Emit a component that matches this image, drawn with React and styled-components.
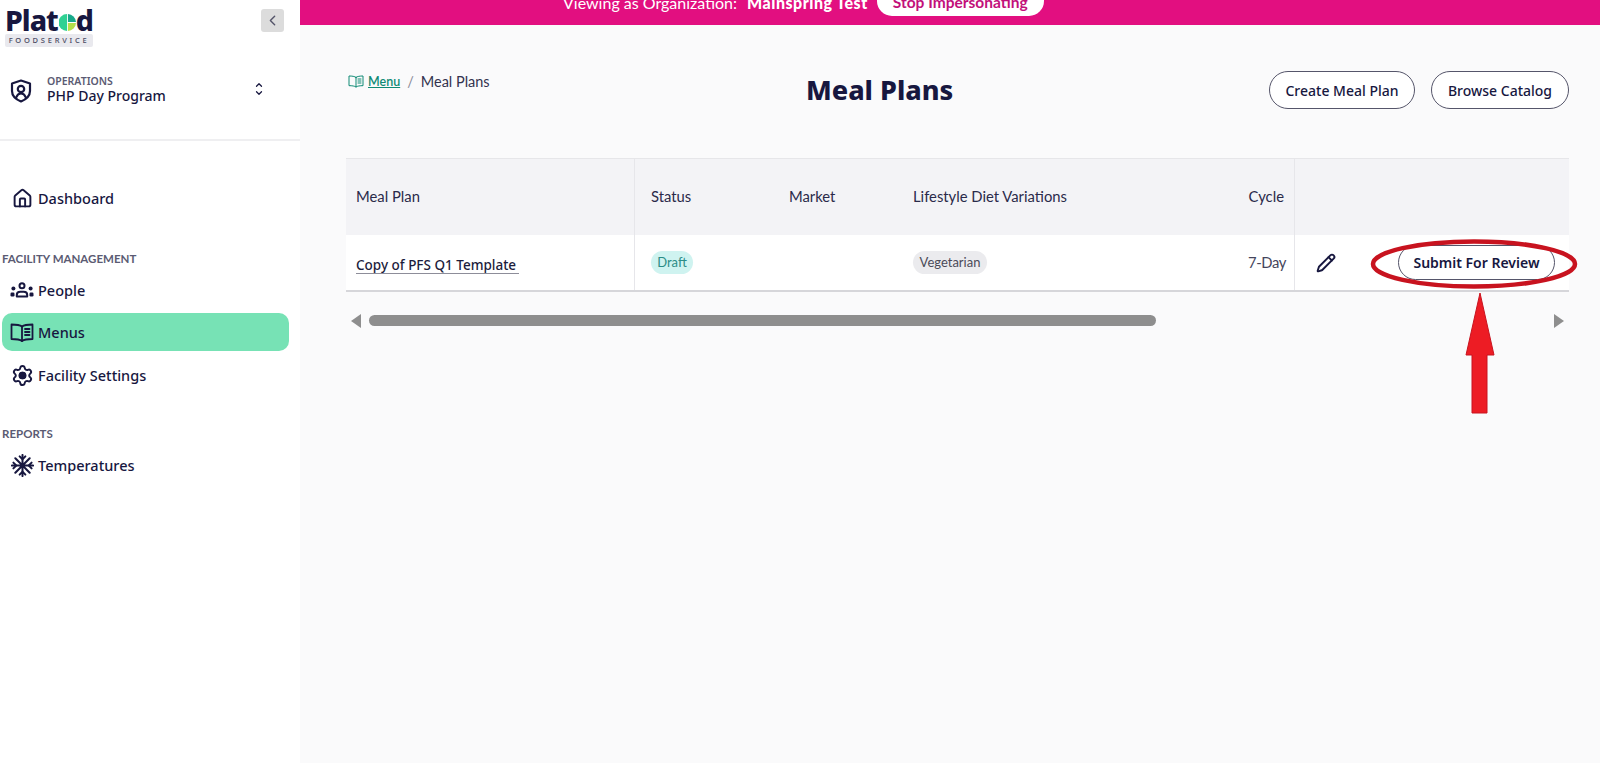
import React from 'react';
import styled, { createGlobalStyle } from 'styled-components';
import { House, Settings, ChevronUp, ChevronDown, ChevronLeft, Pencil } from 'lucide-react';

const ui = '"Noto Sans", "Open Sans", sans-serif';
const table = 'Lato, "Noto Sans", sans-serif';
const navy = '#17173f';

const Global = createGlobalStyle`
  html, body { margin: 0; padding: 0; height: 100%; background: #fff; overflow: hidden; }
  #root { height: 100%; }
`;

const Page = styled.div`
  display: flex;
  height: 763px;
  width: 1600px;
  font-family: ${ui};
  color: ${navy};
`;

const Sidebar = styled.aside`
  width: 300px;
  flex: none;
  background: #fff;
  display: flex;
  flex-direction: column;
`;

const Brand = styled.div`
  display: flex;
  justify-content: space-between;
  align-items: flex-start;
  padding: 7px 16px 0 5px;
  height: 66px;
  box-sizing: border-box;
`;

const Logo = styled.div`
  width: 88px;
`;

const LogoWord = styled.div`
  display: flex;
  align-items: center;
  height: 26px;
  font-size: 28.5px;
  font-weight: 800;
  letter-spacing: -1px;
  line-height: 26px;
  color: ${navy};
`;

const LogoSub = styled.div`
  margin-top: 1px;
  height: 13px;
  background: #e9e9ee;
  border-radius: 2px;
  font-size: 7.5px;
  line-height: 13px;
  letter-spacing: 2.75px;
  text-align: center;
  white-space: nowrap;
  color: #4b4b63;
  font-weight: 500;
`;

const Collapse = styled.button`
  width: 23px;
  height: 23px;
  margin-top: 2px;
  border: 0;
  padding: 0;
  border-radius: 3px;
  background: #dcdcdc;
  color: #55556a;
  display: flex;
  align-items: center;
  justify-content: center;
`;

const OrgSwitch = styled.div`
  display: flex;
  align-items: center;
  height: 49px;
  padding: 0 0 24px 9px;
  border-bottom: 2px solid #efeff1;
`;

const OrgText = styled.div`
  margin-left: 14px;
  width: 207px;
  margin-top: -2px;
`;

const OrgLabel = styled.div`
  font-size: 10.5px;
  line-height: 12px;
  font-weight: 600;
  color: #5b5b73;
`;

const OrgName = styled.div`
  font-size: 14px;
  line-height: 18px;
  font-weight: 500;
`;

const Updown = styled.div`
  display: flex;
  flex-direction: column;
  align-items: center;
  margin-top: -4px;
  svg { margin: -1px 0; display: block; }
`;

const Nav = styled.nav`
  display: flex;
  flex-direction: column;
  padding: 38px 0 0 2px;
`;

const NavItem = styled.a`
  display: flex;
  align-items: center;
  width: 287px;
  height: 38px;
  margin-bottom: ${(p) => p.$mb ?? 4}px;
  padding-left: 8px;
  box-sizing: border-box;
  border-radius: 10px;
  background: ${(p) => (p.$active ? '#77e2b5' : 'transparent')};
  font-size: 14.5px;
  font-weight: 500;
  color: ${navy};
`;

const NavIcon = styled.span`
  width: 24px;
  height: 24px;
  margin-right: 4px;
  display: flex;
  align-items: center;
  justify-content: center;
  circle.hub { fill: currentColor; }
`;

const NavHeading = styled.div`
  font-family: ${table};
  font-size: 11.5px;
  line-height: 14px;
  font-weight: 700;
  color: #5b5b73;
  margin: ${(p) => p.$mt}px 0 ${(p) => p.$mb}px;
`;

const Main = styled.main`
  flex: 1;
  min-width: 0;
  background: #fafafb;
  display: flex;
  flex-direction: column;
  position: relative;
`;

const Banner = styled.div`
  height: 25px;
  background: #e20f80;
  color: #fff;
  overflow: hidden;
  display: flex;
  align-items: flex-end;
  padding: 0 0 9px 263px;
  box-sizing: border-box;
  font-family: ${table};
  font-size: 16px;
  line-height: 20px;
`;

const BannerText = styled.span`
  margin-right: 10px;
  margin-bottom: 3px;
  white-space: nowrap;
`;

const BannerOrg = styled(BannerText)`
  font-weight: 900;
  letter-spacing: 0.5px;
  margin-right: 9px;
`;

const StopButton = styled.button`
  flex: none;
  width: 167px;
  height: 30px;
  border: 0;
  border-radius: 15px;
  background: #fff;
  color: #c2107a;
  font-family: ${table};
  font-size: 15.5px;
  font-weight: 700;
  padding: 2px 0 0;
  line-height: 20px;
`;

const Content = styled.div`
  padding: 46px 31px 0 46px;
`;

const Header = styled.div`
  display: grid;
  grid-template-columns: 460px auto 1fr;
  height: 87px;
`;

const Crumbs = styled.div`
  display: flex;
  align-items: center;
  height: 20px;
  margin-left: 2px;
  font-family: ${table};
  font-size: 14.5px;
  color: #33334f;
`;

const CrumbIcon = styled.span`
  display: flex;
  color: #0f8a75;
`;

const CrumbLink = styled.a`
  color: #0f8a75;
  font-size: 12.5px;
  font-weight: 600;
  text-decoration: underline;
  margin-left: 4px;
`;

const CrumbSep = styled.span`
  color: #8a8a98;
  margin: 0 7px;
`;

const Title = styled.h1`
  margin: 1px 0 0;
  font-size: 27px;
  line-height: 36px;
  font-weight: 800;
  color: ${navy};
`;

const Actions = styled.div`
  display: flex;
  justify-content: flex-end;
  gap: 16px;
`;

const Pill = styled.button`
  height: 38px;
  width: ${(p) => p.$w}px;
  padding: 0;
  flex: none;
  border: 1px solid #55556a;
  border-radius: 19px;
  background: #fff;
  color: ${navy};
  font-family: ${ui};
  font-size: 14px;
  font-weight: 500;
`;

const Table = styled.div`
  display: grid;
  grid-template-columns: 289px 138px 124px 284px 114px 274px;
  font-family: ${table};
  border-top: 1px solid #e6e6e9;
  border-bottom: 2px solid #d6d6da;
`;

const HeadCell = styled.div`
  height: 76px;
  box-sizing: border-box;
  background: #f3f3f6;
  display: flex;
  align-items: center;
  padding: 0 ${(p) => p.$pr ?? 0}px 3px ${(p) => p.$pl ?? 16}px;
  justify-content: ${(p) => (p.$right ? 'flex-end' : 'flex-start')};
  border-right: ${(p) => (p.$rule ? '1px solid #e6e6ea' : '0')};
  font-size: 14.8px;
  color: #2a2a4a;
`;

const Cell = styled.div`
  height: 55px;
  box-sizing: border-box;
  background: #fff;
  display: flex;
  align-items: center;
  padding: 0 ${(p) => p.$pr ?? 0}px 0 ${(p) => p.$pl ?? 16}px;
  justify-content: ${(p) => (p.$right ? 'flex-end' : 'flex-start')};
  border-right: ${(p) => (p.$rule ? '1px solid #e6e6ea' : '0')};
  font-size: 14.8px;
  color: #45455c;
`;

const PlanLink = styled.a`
  font-family: ${ui};
  font-weight: 500;
  color: #1c1c3c;
  font-size: 13.5px;
  padding-top: 2px;
  border-bottom: 1px solid #8d8d99;
  line-height: 16px;
  padding-right: 3px;
  margin-top: 3px;
`;

const Tag = styled.span`
  display: inline-flex;
  align-items: center;
  justify-content: center;
  height: 23px;
  width: ${(p) => p.$w}px;
  border-radius: 12px;
  font-size: 13px;
  background: ${(p) => (p.$draft ? '#cff3f0' : '#ebebee')};
  color: ${(p) => (p.$draft ? '#2b8c86' : '#4a4a58')};
  margin-top: -1px;
`;

const CycleText = styled.span`
  margin-top: -2px;
  letter-spacing: -0.4px;
`;

const ActionCell = styled(Cell)`
  justify-content: space-between;
  padding: 0 14px 0 21px;
`;

const EditIcon = styled.span`
  display: flex;
  color: ${navy};
`;

const SubmitButton = styled(Pill)`
  width: 157px;
  height: 35px;
  margin-top: -1px;
  border-radius: 18px;
  font-weight: 600;
`;

const Annotation = styled.svg`
  position: absolute;
  left: 1071px;
  top: 238px;
  width: 210px;
  height: 180px;
  overflow: visible;
  pointer-events: none;
`;

const Scrollbar = styled.div`
  display: flex;
  align-items: center;
  height: 57px;
  padding: 0 5px;
`;

const Arrow = styled.span`
  flex: none;
  width: 0;
  height: 0;
  border-top: 7px solid transparent;
  border-bottom: 7px solid transparent;
  border-right: ${(p) => (p.$left ? '10px solid #8e8e8e' : '0')};
  border-left: ${(p) => (p.$left ? '0' : '10px solid #8e8e8e')};
`;

const Track = styled.div`
  flex: 1;
  margin: 0 8px;
`;

const Thumb = styled.div`
  width: 787px;
  height: 11px;
  border-radius: 6px;
  background: #8e8e8e;
`;

const PeopleIcon = () => (
  <svg width="24" height="16" viewBox="0 0 24 16" fill="currentColor">
    <circle cx="12" cy="3.800" r="2.500" fill="none" stroke="currentColor" strokeWidth="2" />
    <path d="M6.800 14.500v-1.500c0-1.800 1.500-3.200 3.500-3.200h3.400c2 0 3.500 1.400 3.500 3.200v1.500z" fill="none" stroke="currentColor" strokeWidth="2" strokeLinejoin="round" />
    <circle cx="3.400" cy="6.500" r="2" />
    <circle cx="20.600" cy="6.500" r="2" />
    <rect x="0.500" y="10.500" width="4" height="4" rx="1.200" />
    <rect x="19.500" y="10.500" width="4" height="4" rx="1.200" />
  </svg>
);

const BookIcon = ({ size = 24, weight = 1.8 }) => (
  <svg width={size} height={size} viewBox="0 0 24 24" fill="none" stroke="currentColor" strokeWidth={weight} strokeLinejoin="round" strokeLinecap="round">
    <path d="M12 6.500C10 5 6 4.500 1.500 4.500v14.500c4.500 0 8.500.5 10.500 2 2-1.500 6-2 10.500-2V4.500C18 4.500 14 5 12 6.500z" />
    <path d="M12 6.500V21" />
    <path d="M15 9h4.500M15 12h4.500M15 15h4.500" />
  </svg>
);

const ShieldIcon = () => (
  <svg width="24" height="24" viewBox="0 0 24 24" fill="none" stroke="currentColor" strokeWidth="2.200" strokeLinejoin="round" strokeLinecap="round">
    <path d="M12 1.500l9 3v7.500c0 5-3.800 8.300-9 10.500-5.200-2.200-9-5.500-9-10.500V4.500z" />
    <circle cx="12" cy="10" r="3.200" />
    <path d="M7.500 18c.8-2.500 2.500-3.500 4.500-3.500s3.700 1 4.500 3.500" />
  </svg>
);

const SnowIcon = () => (
  <svg width="23" height="23" viewBox="0 0 24 24" fill="none" stroke="currentColor" strokeWidth="2.100" strokeLinecap="round" strokeLinejoin="round">
    <path d="M12 1v22M1 12h22M4.500 4.500l15 15M19.500 4.500l-15 15" />
    <path d="M9 2.500l3 3 3-3M9 21.500l3-3 3 3M2.500 9l3 3-3 3M21.500 9l-3 3 3 3" />
  </svg>
);

const LogoMark = () => (
  <svg width="17" height="17" viewBox="0 0 20 20" style={{ margin: '4px 0 0 1px', flex: 'none' }}>
    <path d="M9.500 0a10 10 0 0 0 0 20z" fill="#2fd193" />
    <path d="M10.500 0a10 10 0 0 1 9.500 9.500h-9.500z" fill="#18a98a" />
    <path d="M10.500 10.500h9.500a10 10 0 0 1-9.500 9.500z" fill="#b5e04a" />
  </svg>
);

const CogIcon = () => (
  <Settings size={23} strokeWidth={2}>
    <circle className="hub" cx="12" cy="12" r="3" />
  </Settings>
);

export default function App() {
  return (
    <Page>
      <Global />
      <Sidebar>
        <Brand>
          <Logo>
            <LogoWord>Plat<LogoMark />d</LogoWord>
            <LogoSub>FOODSERVICE</LogoSub>
          </Logo>
          <Collapse><ChevronLeft size={17} strokeWidth={2} /></Collapse>
        </Brand>
        <OrgSwitch>
          <ShieldIcon />
          <OrgText>
            <OrgLabel>OPERATIONS</OrgLabel>
            <OrgName>PHP Day Program</OrgName>
          </OrgText>
          <Updown>
            <ChevronUp size={10} strokeWidth={3} />
            <ChevronDown size={10} strokeWidth={3} />
          </Updown>
        </OrgSwitch>
        <Nav>
          <NavItem><NavIcon><House size={21} strokeWidth={2.200} /></NavIcon>Dashboard</NavItem>
          <NavHeading $mt={31} $mb={5}>FACILITY MANAGEMENT</NavHeading>
          <NavItem><NavIcon><PeopleIcon /></NavIcon>People</NavItem>
          <NavItem $active $mb={5}><NavIcon><BookIcon /></NavIcon>Menus</NavItem>
          <NavItem><NavIcon><CogIcon /></NavIcon>Facility Settings</NavItem>
          <NavHeading $mt={29} $mb={5}>REPORTS</NavHeading>
          <NavItem><NavIcon><SnowIcon /></NavIcon>Temperatures</NavItem>
        </Nav>
      </Sidebar>
      <Main>
        <Banner>
          <BannerText>Viewing as Organization:</BannerText>
          <BannerOrg>Mainspring Test</BannerOrg>
          <StopButton>Stop Impersonating</StopButton>
        </Banner>
        <Content>
          <Header>
            <Crumbs>
              <CrumbIcon><BookIcon size={16} weight={1.500} /></CrumbIcon>
              <CrumbLink>Menu</CrumbLink>
              <CrumbSep>/</CrumbSep>
              Meal Plans
            </Crumbs>
            <Title>Meal Plans</Title>
            <Actions>
              <Pill $w={146}>Create Meal Plan</Pill>
              <Pill $w={138}>Browse Catalog</Pill>
            </Actions>
          </Header>
          <Table>
            <HeadCell $pl={10} $rule>Meal Plan</HeadCell>
            <HeadCell>Status</HeadCell>
            <HeadCell>Market</HeadCell>
            <HeadCell>Lifestyle Diet Variations</HeadCell>
            <HeadCell $right $pr={10} $rule>Cycle</HeadCell>
            <HeadCell />
            <Cell $pl={10} $rule><PlanLink>Copy of PFS Q1 Template</PlanLink></Cell>
            <Cell><Tag $draft $w={42}>Draft</Tag></Cell>
            <Cell />
            <Cell><Tag $w={74}>Vegetarian</Tag></Cell>
            <Cell $right $pr={8} $rule><CycleText>7-Day</CycleText></Cell>
            <ActionCell>
              <EditIcon><Pencil size={20} strokeWidth={2.300} /></EditIcon>
              <SubmitButton>Submit For Review</SubmitButton>
            </ActionCell>
          </Table>
          <Scrollbar>
            <Arrow $left />
            <Track><Thumb /></Track>
            <Arrow />
          </Scrollbar>
        </Content>
        <Annotation viewBox="0 0 210 180">
          <ellipse cx="103" cy="26" rx="101" ry="22.500" fill="none" stroke="#c8131f" strokeWidth="4.500" />
          <path d="M109 55 L123 117 L116 117 L116 175 L101 175 L101 117 L95 117 Z" fill="#ed1c24" stroke="#c8131f" strokeWidth="1" />
        </Annotation>
      </Main>
    </Page>
  );
}
